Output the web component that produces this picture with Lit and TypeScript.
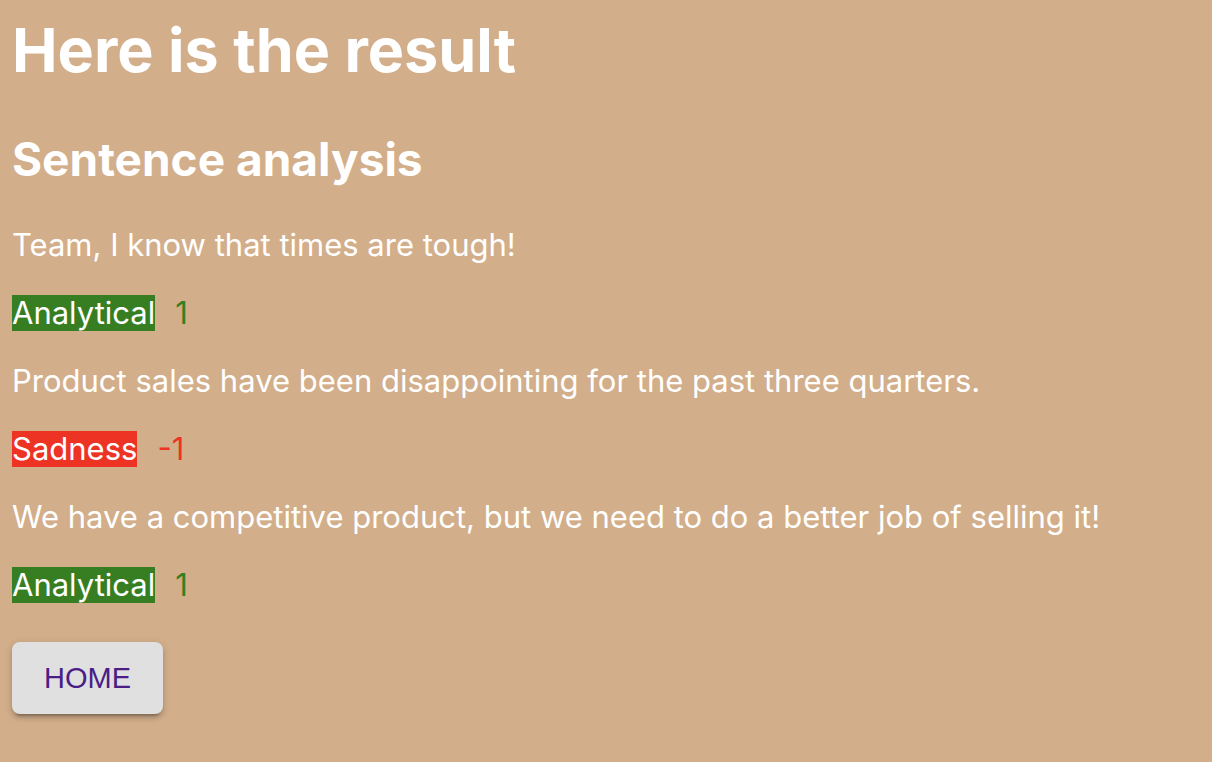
import { LitElement, html, css } from "lit";
import { customElement } from "lit/decorators.js";
import { classMap } from "lit/directives/class-map.js";

interface Sentence {
  text: string;
  tone: string;
  score: number;
}

const sentences: Sentence[] = [
  { text: "Team, I know that times are tough!", tone: "Analytical", score: 1 },
  { text: "Product sales have been disappointing for the past three quarters.", tone: "Sadness", score: -1 },
  { text: "We have a competitive product, but we need to do a better job of selling it!", tone: "Analytical", score: 1 },
];

@customElement("app-root")
export class AppRoot extends LitElement {
  static styles = css`
    :host {
      display: block;
      box-sizing: border-box;
      min-height: 100vh;
      padding: 12px;
      background: #d2ae8a;
      color: #fff;
      font-family: Inter, "Liberation Sans", sans-serif;
      font-size: 31px;
      font-weight: 400;
      line-height: 36px;
    }
    h1 {
      margin: 0 0 43px;
      font-size: 61px;
      line-height: 76px;
      font-weight: 700;
    }
    h2 {
      margin: 0 0 40px;
      font-size: 46px;
      line-height: 56px;
      font-weight: 700;
    }
    p {
      margin: 0 0 32px;
    }
    .tone {
      display: flex;
      gap: 20px;
    }
    .label {
      background: #377e22;
    }
    .score {
      color: #377e22;
    }
    .negative .label {
      background: #ed3323;
    }
    .negative .score {
      color: #ed3323;
    }
    .home {
      display: inline-block;
      margin-top: 7px;
      padding: 18px 32px;
      border-radius: 8px;
      background: #e0e0e0;
      color: #4a1d87;
      font-family: "Liberation Sans", Arial, sans-serif;
      font-size: 29px;
      text-decoration: none;
      box-shadow: 0 6px 2px -4px rgba(0, 0, 0, 0.2), 0 4px 4px rgba(0, 0, 0, 0.14), 0 2px 10px rgba(0, 0, 0, 0.12);
    }
  `;

  render() {
    return html`
      <main>
        <h1>Here is the result</h1>
        <h2>Sentence analysis</h2>
        ${sentences.map(
          (s) => html`
            <p>${s.text}</p>
            <p class=${classMap({ tone: true, negative: s.score < 0 })}>
              <span class="label">${s.tone}</span><span class="score">${s.score}</span>
            </p>
          `
        )}
        <a class="home" href="#">HOME</a>
      </main>
    `;
  }
}
